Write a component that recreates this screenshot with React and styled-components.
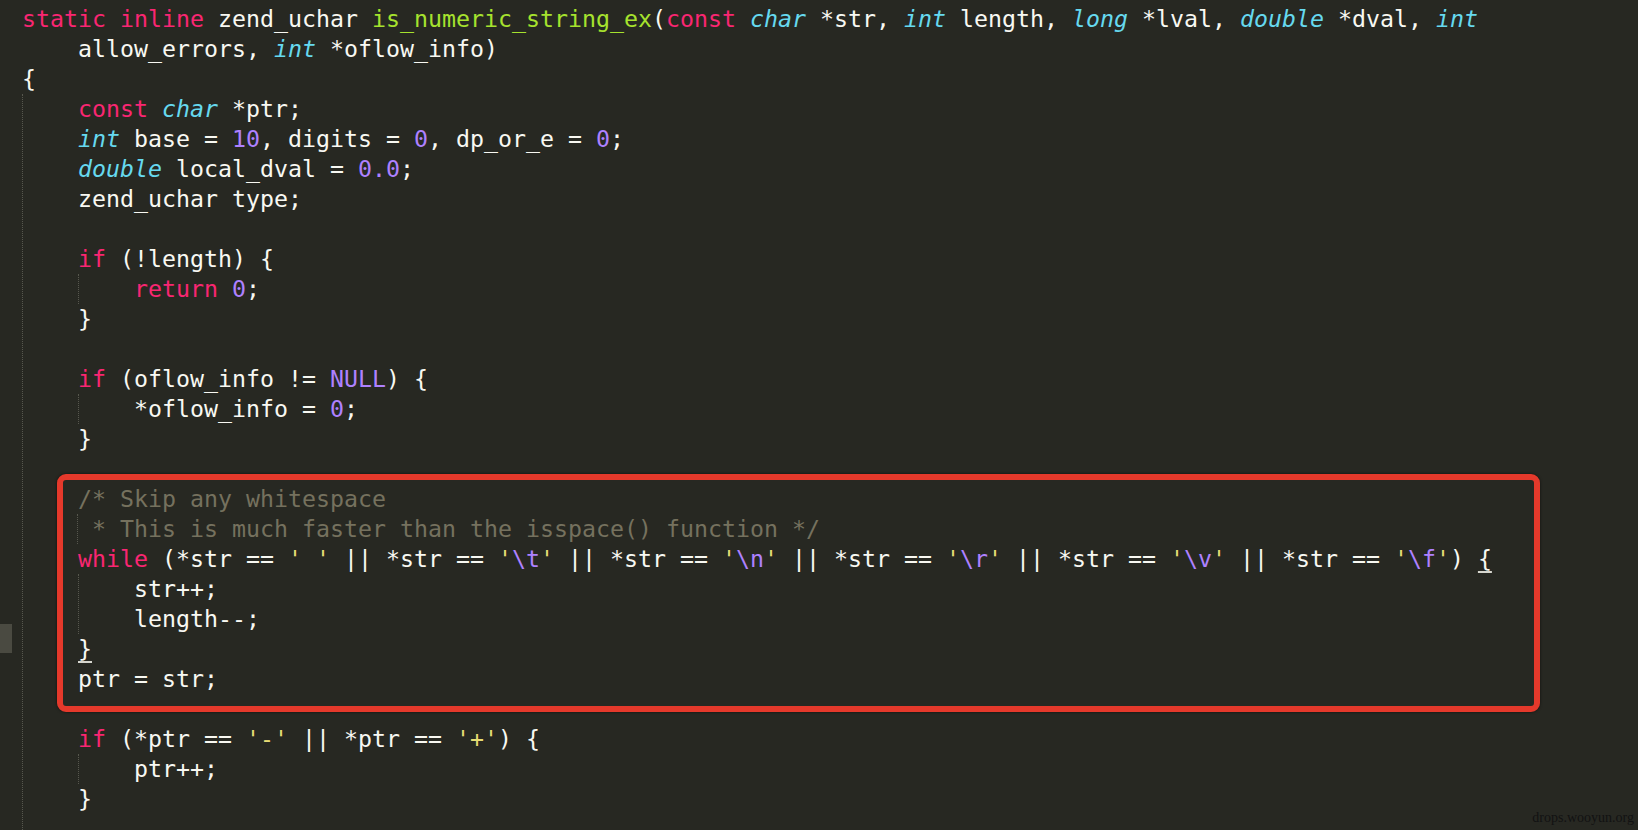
import styled, { createGlobalStyle, css } from "styled-components";

const GlobalStyle = createGlobalStyle`
    html,
    body {
        margin: 0;
        padding: 0;
        background: #272822;
        overflow: hidden;
    }
`;

const palette = {
    p: "#f8f8f2",
    m: "#f8f8f2",
    k: "#f92672",
    t: "#66d9ef",
    f: "#a6e22e",
    n: "#ae81ff",
    e: "#ae81ff",
    s: "#e6db74",
    c: "#75715e",
};

const Editor = styled.div`
    position: relative;
    display: flex;
    width: 1638px;
    height: 830px;
    overflow: hidden;
    background: #272822;
    color: #f8f8f2;
    font-family: "DejaVu Sans Mono", "Liberation Mono", monospace;
    font-size: 23.25px;
`;

const Gutter = styled.div`
    display: flex;
    flex-direction: column;
    flex-shrink: 0;
    width: 12px;
    padding-top: 4px;
`;

const GutterRow = styled.div`
    height: 30px;
    background: ${(p) => (p.$active ? "#4a4a41" : "transparent")};
`;

const Code = styled.div`
    flex: 1;
    padding: 4px 0 0 10px;
`;

const Row = styled.div`
    height: 30px;
    line-height: 30px;
    white-space: pre;
    padding-left: ${(p) => (p.$indent ? "56px" : "0")};
`;

// indent guide: a dotted rule on the left of a nested block
const Scope = styled.div`
    border-left: 1px dotted #57574e;
    padding-left: ${(p) => (p.$flush ? "0" : "55px")};
    margin-left: ${(p) => (p.$flush ? "-1px" : "0")};
`;

const Callout = styled.div`
    box-sizing: border-box;
    width: 1483px;
    margin: -10px 0 -18px -21px;
    padding: 4px 0 12px 15px;
    border: 6px solid #e5392b;
    border-radius: 9px;
    box-shadow: 0 0 3px rgba(0, 0, 0, 0.6);
`;

const Tok = styled.span`
    color: ${(p) => palette[p.$k]};
    font-style: ${(p) => (p.$k === "t" ? "italic" : "normal")};
    ${(p) =>
        p.$k === "m" &&
        css`
            text-decoration: underline;
            text-decoration-thickness: 2px;
            text-underline-offset: 4px;
            text-decoration-color: #d6d6ce;
        `}
`;

const Watermark = styled.span`
    position: absolute;
    right: 4px;
    bottom: 4px;
    font-family: "Liberation Serif", serif;
    font-size: 14px;
    color: #121212;
`;

function Line({ tokens = [], indent }) {
    return (
        <Row $indent={indent}>
            {tokens.map(([k, text], i) => (
                <Tok key={i} $k={k}>
                    {text}
                </Tok>
            ))}
        </Row>
    );
}

const q = (esc) => [["s", "'"], ["e", esc], ["s", "'"]];

const whileLine = [
    ["k", "while"],
    ["p", " (*str == "],
    ["s", "' '"],
    ["p", " || *str == "],
    ...q("\\t"),
    ["p", " || *str == "],
    ...q("\\n"),
    ["p", " || *str == "],
    ...q("\\r"),
    ["p", " || *str == "],
    ...q("\\v"),
    ["p", " || *str == "],
    ...q("\\f"),
    ["p", ") "],
    ["m", "{"],
];

export default function App() {
    return (
        <Editor>
            <GlobalStyle />
            <Gutter>
                {Array.from({ length: 28 }, (_, i) => (
                    <GutterRow key={i} $active={i === 21} />
                ))}
            </Gutter>
            <Code>
                <Line
                    tokens={[
                        ["k", "static"],
                        ["p", " "],
                        ["k", "inline"],
                        ["p", " zend_uchar "],
                        ["f", "is_numeric_string_ex"],
                        ["p", "("],
                        ["k", "const"],
                        ["p", " "],
                        ["t", "char"],
                        ["p", " *str, "],
                        ["t", "int"],
                        ["p", " length, "],
                        ["t", "long"],
                        ["p", " *lval, "],
                        ["t", "double"],
                        ["p", " *dval, "],
                        ["t", "int"],
                    ]}
                />
                <Line indent tokens={[["p", "allow_errors, "], ["t", "int"], ["p", " *oflow_info)"]]} />
                <Line tokens={[["p", "{"]]} />
                <Scope>
                    <Line tokens={[["k", "const"], ["p", " "], ["t", "char"], ["p", " *ptr;"]]} />
                    <Line
                        tokens={[
                            ["t", "int"],
                            ["p", " base = "],
                            ["n", "10"],
                            ["p", ", digits = "],
                            ["n", "0"],
                            ["p", ", dp_or_e = "],
                            ["n", "0"],
                            ["p", ";"],
                        ]}
                    />
                    <Line tokens={[["t", "double"], ["p", " local_dval = "], ["n", "0.0"], ["p", ";"]]} />
                    <Line tokens={[["p", "zend_uchar type;"]]} />
                    <Line />
                    <Line tokens={[["k", "if"], ["p", " (!length) {"]]} />
                    <Scope>
                        <Line tokens={[["k", "return"], ["p", " "], ["n", "0"], ["p", ";"]]} />
                    </Scope>
                    <Line tokens={[["p", "}"]]} />
                    <Line />
                    <Line tokens={[["k", "if"], ["p", " (oflow_info != "], ["n", "NULL"], ["p", ") {"]]} />
                    <Scope>
                        <Line tokens={[["p", "*oflow_info = "], ["n", "0"], ["p", ";"]]} />
                    </Scope>
                    <Line tokens={[["p", "}"]]} />
                    <Line />
                    <Callout>
                        <Line tokens={[["c", "/* Skip any whitespace"]]} />
                        <Scope $flush>
                            <Line tokens={[["c", " * This is much faster than the isspace() function */"]]} />
                        </Scope>
                        <Line tokens={whileLine} />
                        <Scope>
                            <Line tokens={[["p", "str++;"]]} />
                            <Line tokens={[["p", "length--;"]]} />
                        </Scope>
                        <Line tokens={[["m", "}"]]} />
                        <Line tokens={[["p", "ptr = str;"]]} />
                    </Callout>
                    <Line />
                    <Line
                        tokens={[
                            ["k", "if"],
                            ["p", " (*ptr == "],
                            ["s", "'-'"],
                            ["p", " || *ptr == "],
                            ["s", "'+'"],
                            ["p", ") {"],
                        ]}
                    />
                    <Scope>
                        <Line tokens={[["p", "ptr++;"]]} />
                    </Scope>
                    <Line tokens={[["p", "}"]]} />
                    <Line />
                </Scope>
            </Code>
            <Watermark>drops.wooyun.org</Watermark>
        </Editor>
    );
}
